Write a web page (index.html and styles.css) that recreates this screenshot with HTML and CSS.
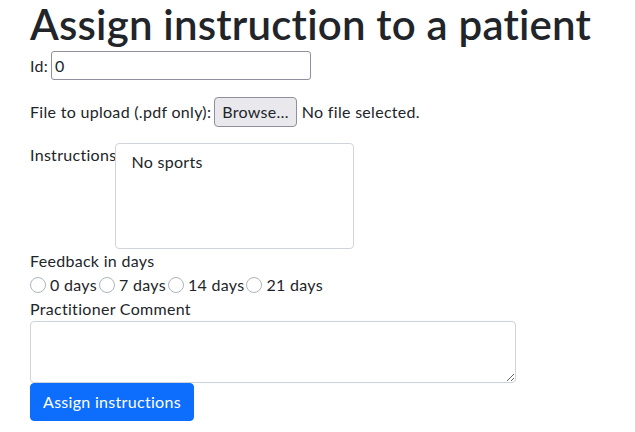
FILE: index.html
```html
<!DOCTYPE html>
<html lang="en">
<head>
<meta charset="utf-8">
<title>Assign instruction</title>
<link rel="stylesheet" href="styles.css">
</head>
<body>
<div class="page">
  <h1 class="title">Assign instruction to a patient</h1>
  <form class="form">
    <div class="row id-row">
      <label class="lbl" for="pid">Id:</label>
      <input class="id-input" id="pid" type="text" value="0">
    </div>
    <div class="row file-row">
      <span class="lbl">File to upload (.pdf only):</span>
      <span class="file">
        <span class="browse">Browse…</span>
        <span class="file-name">No file selected.</span>
      </span>
    </div>
    <div class="row instr-row">
      <label class="lbl" for="instr">Instructions</label>
      <textarea class="instr" id="instr">No sports</textarea>
    </div>
    <div class="lbl-line">Feedback in days</div>
    <div class="radios">
      <label class="radio"><span class="circle"></span><span>0 days</span></label>
      <label class="radio"><span class="circle"></span><span>7 days</span></label>
      <label class="radio"><span class="circle"></span><span>14 days</span></label>
      <label class="radio"><span class="circle"></span><span>21 days</span></label>
    </div>
    <div class="lbl-line">Practitioner Comment</div>
    <textarea class="comment"></textarea>
    <div class="actions"><button type="button" class="btn">Assign instructions</button></div>
  </form>
</div>
</body>
</html>
```
FILE: styles.css
```css
html, body {
  margin: 0;
  padding: 0;
  background: #fff;
}
body {
  font-family: "Lato", "Open Sans", sans-serif;
  font-size: 16px;
  line-height: 24px;
  letter-spacing: 0.3px;
  color: #212529;
}
.page {
  padding: 0 30px;
}
.title {
  margin: 0;
  font-size: 42px;
  font-weight: 600;
  line-height: 48px;
  letter-spacing: 0.2px;
  color: #212529;
}
.form {
  display: flex;
  flex-direction: column;
  align-items: flex-start;
}
.row {
  display: flex;
  align-items: center;
}
.id-row {
  margin-top: 3px;
}
.id-input {
  width: 260px;
  height: 29px;
  box-sizing: border-box;
  margin-left: 3px;
  padding: 0 3px;
  border: 1px solid #8f8f9d;
  border-radius: 3px;
  font: inherit;
  letter-spacing: inherit;
  color: #212529;
}
.file-row {
  margin-top: 17px;
}
.file {
  display: flex;
  align-items: center;
  margin-left: 3px;
}
.browse {
  display: inline-block;
  box-sizing: border-box;
  height: 30px;
  padding: 2px 7px;
  line-height: 24px;
  background: #e9e9ed;
  border: 1px solid #8f8f9d;
  border-radius: 4px;
}
.file-name {
  margin-left: 5px;
}
.instr-row {
  margin-top: 16px;
  align-items: flex-start;
}
.instr {
  width: 239px;
  height: 106px;
  box-sizing: border-box;
  margin: 0 0 0 -1px;
  padding: 6px 15px;
  border: 1px solid #ced4da;
  border-radius: 4px;
  font: inherit;
  letter-spacing: inherit;
  line-height: 24px;
  color: #212529;
  resize: none;
}
.lbl-line {
  line-height: 24px;
}
.radios {
  display: flex;
  align-items: center;
  height: 24px;
}
.radio {
  display: flex;
  align-items: center;
  margin-right: 2px;
}
.circle {
  width: 16px;
  height: 16px;
  box-sizing: border-box;
  border: 1px solid #adb5bd;
  border-radius: 50%;
  margin-right: 4px;
  background: #fff;
}
.comment {
  width: 486px;
  height: 62px;
  box-sizing: border-box;
  margin: 0;
  padding: 6px 12px;
  border: 1px solid #ced4da;
  border-radius: 4px;
  font: inherit;
  display: block;
}
.btn {
  height: 38px;
  padding: 6px 12px;
  font: inherit;
  letter-spacing: inherit;
  line-height: 24px;
  color: #fff;
  background: #0d6efd;
  border: 1px solid #0d6efd;
  border-radius: 4px;
}
```
